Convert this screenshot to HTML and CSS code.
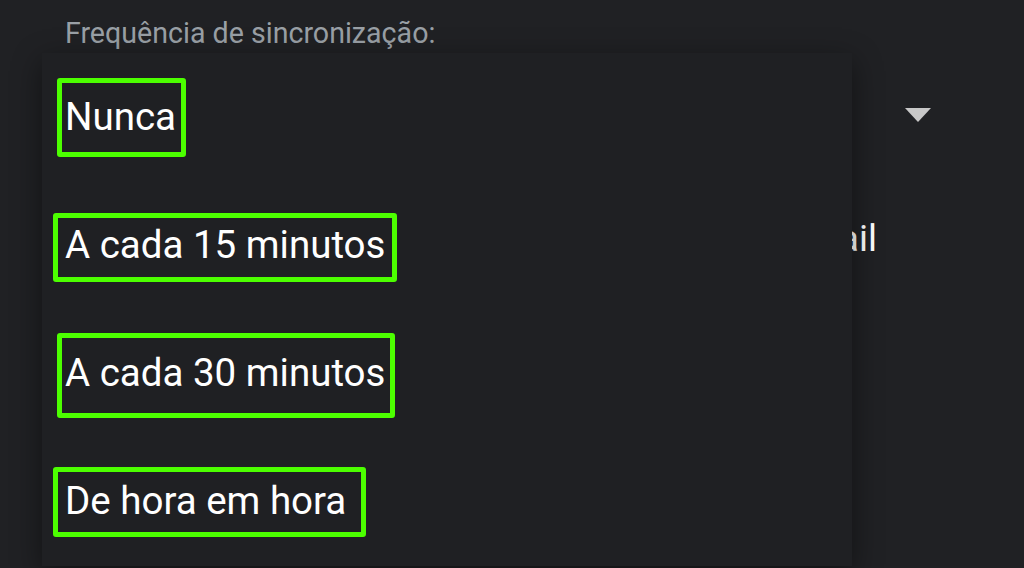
FILE: index.html
```html
<!DOCTYPE html>
<html lang="pt">
<head>
<meta charset="utf-8">
<title>Frequência de sincronização</title>
<link rel="stylesheet" href="styles.css">
</head>
<body>
<div class="page">
  <div class="label">Frequência de sincronização:</div>
  <div class="select-row">
    <span class="select-value">Nunca</span>
    <span class="caret"></span>
  </div>
  <div class="text-row">
    <span class="row-text">Sincronizar e-mail</span>
  </div>

  <ul class="menu">
    <li class="option"><span class="opt opt-1">Nunca</span></li>
    <li class="option"><span class="opt opt-2">A cada 15 minutos</span></li>
    <li class="option"><span class="opt opt-3">A cada 30 minutos</span></li>
    <li class="option"><span class="opt opt-4">De hora em hora</span></li>
  </ul>
</div>
</body>
</html>
```

FILE: styles.css
```css
html, body {
  margin: 0;
  padding: 0;
  background: #202124;
  height: 100%;
  overflow: hidden;
}

.page {
  position: relative;
  width: 1024px;
  height: 568px;
  overflow: hidden;
  font-family: Roboto, "Open Sans", Arial, sans-serif;
  color: #ffffff;
}

.label {
  padding: 15px 0 0 65px;
  font-size: 28.6px;
  line-height: 36px;
  color: #9aa0a6;
}

.select-row {
  display: flex;
  align-items: center;
  justify-content: space-between;
  height: 128px;
  padding: 0 93px 0 65px;
  font-size: 38px;
}

.caret {
  width: 0;
  height: 0;
  border-left: 13px solid transparent;
  border-right: 13px solid transparent;
  border-top: 14px solid #c8c8c8;
}

.text-row {
  display: flex;
  justify-content: flex-end;
  align-items: center;
  height: 118px;
  padding-right: 147px;
  font-size: 37px;
}

.menu {
  position: absolute;
  left: 42px;
  top: 53px;
  width: 810px;
  height: 513px;
  margin: 0;
  padding: 0 0 0 23px;
  box-sizing: border-box;
  list-style: none;
  background: #1f2023;
  box-shadow: 0 8px 28px rgba(0, 0, 0, 0.45);
}

.option {
  display: flex;
  align-items: center;
  height: 128px;
  font-size: 38.5px;
  color: #ffffff;
}

.opt {
  position: relative;
  display: inline-block;
  line-height: 44px;
}

.opt::after {
  content: "";
  position: absolute;
  border: 5px solid #4cff00;
  border-radius: 3px;
}

.opt-1::after { left: -8px; right: -10px; top: -17px; bottom: -18px; }
.opt-2::after { left: -12px; right: -12px; top: -10px; bottom: -15px; }
.opt-3::after { left: -8px; right: -10px; top: -18px; bottom: -23px; }
.opt-4::after { left: -12px; right: -20px; top: -12px; bottom: -14px; }
```
